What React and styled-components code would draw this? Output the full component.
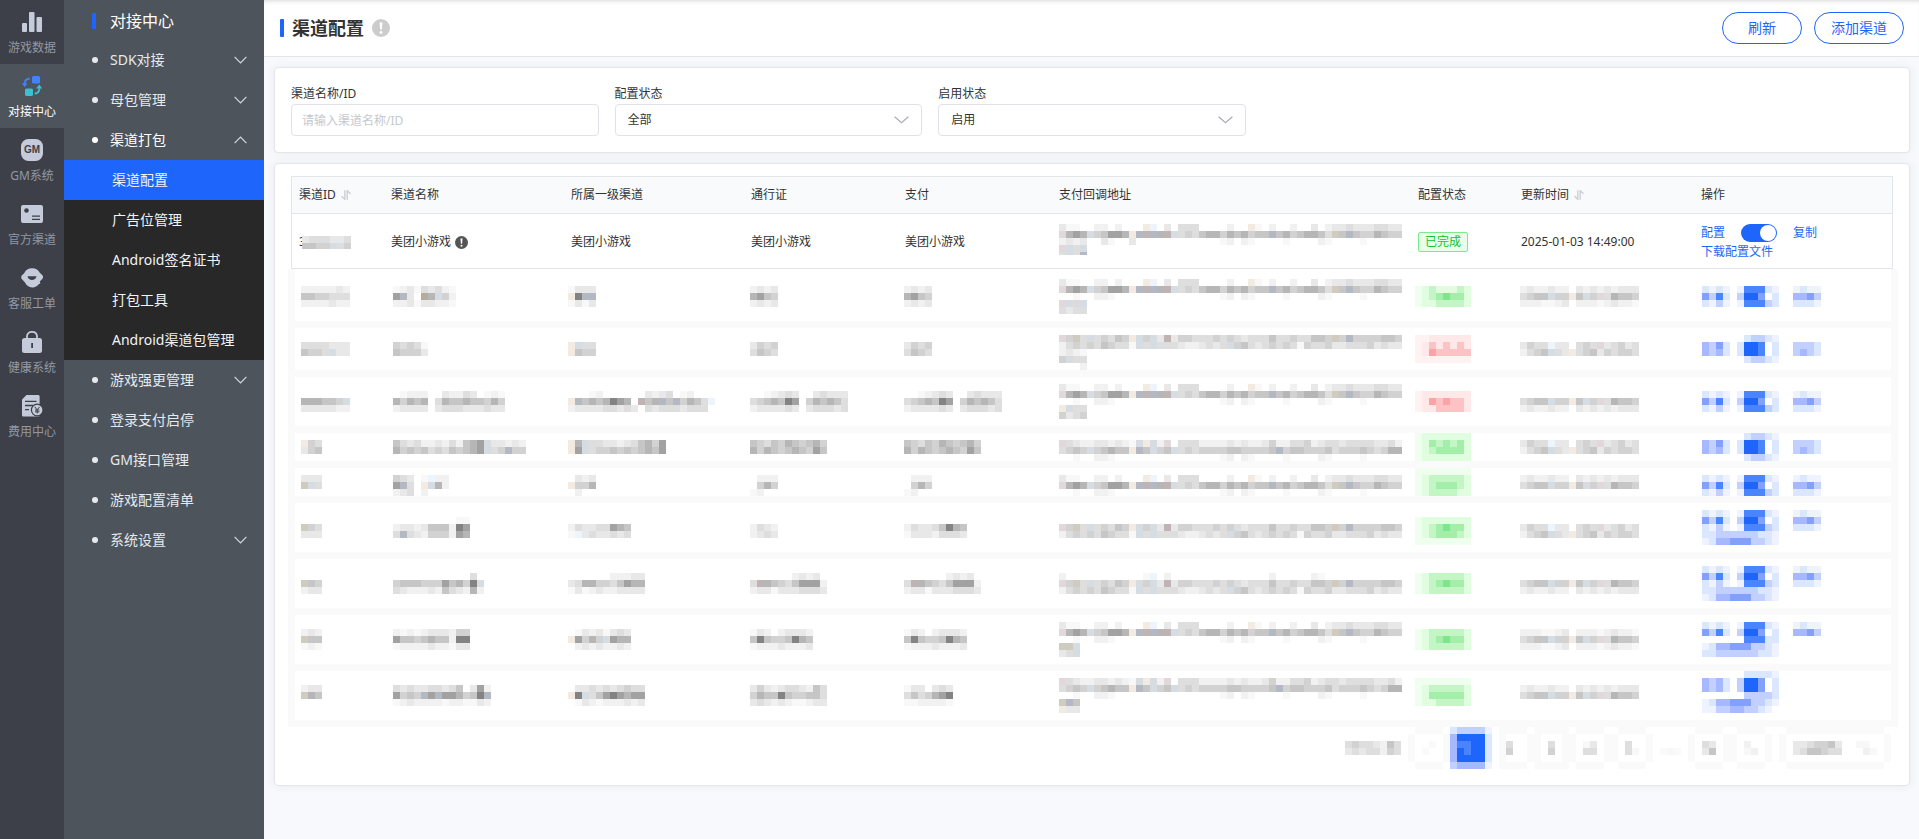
import React, { useId } from "react";
import styled, { createGlobalStyle, css } from "styled-components";

const C = {
  blue: "#1e66fb",
  rail: "#3d4048",
  side: "#4d545b",
  sub: "#282828",
  line: "#e4e5ea",
  text: "#333333",
  mask: "#fafafa",
};

const Global = createGlobalStyle`
  * { box-sizing: border-box; }
  body {
    margin: 0;
    font-family: "Noto Sans", "Noto Sans CJK SC", sans-serif;
    font-size: 12px;
    line-height: 16px;
    color: ${C.text};
    background: #f8f9fc;
  }
  button, input, select { font: inherit; color: inherit; }
  a { color: inherit; text-decoration: none; }
`;

/* ---------- shell ---------- */

const Shell = styled.div`
  display: flex;
  min-height: 100vh;
`;

const Rail = styled.nav`
  flex: 0 0 64px;
  background: ${C.rail};
`;

const RailLink = styled.a`
  display: flex;
  flex-direction: column;
  align-items: center;
  gap: 7px;
  height: 64px;
  padding-top: 11px;
  color: ${(p) => (p.$active ? "#ffffff" : "#9298a4")};
  background: ${(p) => (p.$active ? C.side : "transparent")};
  svg { display: block; width: 22px; height: 22px; }
`;

const Side = styled.nav`
  flex: 0 0 200px;
  background: ${C.side};
`;

const SideTitle = styled.h2`
  display: flex;
  align-items: center;
  gap: 14px;
  height: 40px;
  margin: 0;
  padding: 2px 0 0 28px;
  font-size: 16px;
  line-height: 20px;
  font-weight: 400;
  color: #fff;
  &::before {
    content: "";
    width: 4px;
    height: 16px;
    background: ${C.blue};
  }
`;

const SideLink = styled.a`
  display: flex;
  align-items: center;
  height: 40px;
  padding: 0 17px 0 28px;
  font-size: 14px;
  line-height: 20px;
  color: ${(p) => (p.$open ? "#ffffff" : "#e6e9ee")};
  &::before {
    content: "";
    width: 6px;
    height: 6px;
    margin-right: 12px;
    border-radius: 50%;
    background: currentColor;
  }
  svg { margin-left: auto; transform: ${(p) => (p.$open ? "rotate(180deg)" : "none")}; }
`;

const SubLink = styled.a`
  display: flex;
  align-items: center;
  height: 40px;
  padding-left: 48px;
  font-size: 14px;
  line-height: 20px;
  color: #f2f3f5;
  background: ${(p) => (p.$active ? C.blue : C.sub)};
`;

const Main = styled.main`
  flex: 1;
  min-width: 0;
`;

const PageHead = styled.header`
  display: flex;
  align-items: center;
  gap: 8px;
  height: 57px;
  padding: 0 15px 0 16px;
  background: #fff;
  border-bottom: 1px solid ${C.line};
  box-shadow: inset 0 4px 4px -3px rgba(0, 0, 0, 0.16);
`;

const PageTitle = styled.h1`
  display: flex;
  align-items: center;
  gap: 8px;
  margin: 0;
  font-size: 18px;
  line-height: 24px;
  font-weight: 700;
  &::before {
    content: "";
    width: 4px;
    height: 18px;
    border-radius: 1px;
    background: ${C.blue};
  }
`;

const Actions = styled.div`
  display: flex;
  gap: 12px;
  margin-left: auto;
`;

const PillButton = styled.button`
  min-width: 80px;
  height: 32px;
  padding: 0 16px;
  font-size: 14px;
  line-height: 20px;
  color: ${C.blue};
  background: #fff;
  border: 1px solid ${C.blue};
  border-radius: 16px;
`;

const Content = styled.div`
  display: flex;
  flex-direction: column;
  gap: 10px;
  padding: 10px 9px 10px 10px;
`;

const card = css`
  background: #fff;
  border: 1px solid ${C.line};
  border-radius: 4px;
  box-shadow: 0 0 10px rgba(40, 50, 90, 0.07);
`;

const Filters = styled.form`
  ${card}
  display: grid;
  grid-template-columns: repeat(5, 1fr);
  gap: 16px;
  padding: 18px 16px 16px;
`;

const Field = styled.div`
  display: flex;
  flex-direction: column;
  gap: 2px;
`;

const Label = styled.label``;

const control = css`
  display: block;
  width: 100%;
  height: 32px;
  background: #fff;
  border: 1px solid #e0e2e8;
  border-radius: 4px;
  outline: none;
`;

const TextInput = styled.input`
  ${control}
  padding: 0 10px;
  &::placeholder { color: #c5c8ce; opacity: 1; }
`;

const SelectWrap = styled.div`
  position: relative;
  svg { position: absolute; right: 13px; top: 12px; pointer-events: none; }
`;

const Select = styled.select`
  ${control}
  appearance: none;
  padding: 0 32px 0 12px;
`;

/* ---------- table ---------- */

const TableCard = styled.section`
  ${card}
  padding: 12px 16px 16px;
`;

const Table = styled.table`
  width: 100%;
  table-layout: fixed;
  border-collapse: separate;
  border-spacing: 0;
  border-top: 1px solid ${C.line};
`;

const edges = css`
  &:first-child { border-left: 1px solid ${C.line}; }
  &:last-child { border-right: 1px solid ${C.line}; }
`;

const Th = styled.th`
  ${edges}
  height: 37px;
  padding: 0 7px;
  text-align: left;
  font-weight: 400;
  background: #f9fafc;
  border-bottom: 1px solid ${C.line};
  svg { margin-left: 5px; vertical-align: -1px; }
`;

const Td = styled.td`
  ${edges}
  height: 55px;
  padding: ${(p) => (p.$top ? 10 : 2)}px 7px 0;
  vertical-align: ${(p) => (p.$top ? "top" : "middle")};
  border-bottom: 1px solid ${C.line};
`;

const MaskedTd = styled.td`
  height: ${(p) => p.$rows * 7 + 7 + (p.$first ? 3 : 0)}px;
  padding: ${(p) => (p.$first ? 3 : 0)}px 0 0 ${(p) => p.$inset}px;
  vertical-align: top;
  border-bottom: 7px solid ${C.mask};
  &:first-child { box-shadow: -3px 0 ${C.mask}, inset 4px 0 ${C.mask}; }
  &:last-child { box-shadow: 5px 0 ${C.mask}, inset -2px 0 ${C.mask}; }
`;

const Inline = styled.div`
  display: flex;
  align-items: center;
  gap: ${(p) => p.$gap || 0}px;
`;

const Stack = styled.div`
  display: flex;
  flex-direction: column;
  align-items: flex-start;
  gap: 2px;
`;

const Tag = styled.span`
  display: inline-block;
  height: 20px;
  padding: 0 6px;
  line-height: 18px;
  color: #13c22b;
  background: #e8ffe9;
  border: 1px solid #7bea8a;
  border-radius: 2px;
`;

const TextLink = styled.a`
  color: ${C.blue};
`;

const Toggle = styled.input`
  appearance: none;
  display: flex;
  align-items: center;
  justify-content: flex-end;
  width: 36px;
  height: 18px;
  margin: 0;
  padding: 1px;
  border-radius: 9px;
  background: ${C.blue};
  &::before {
    content: "";
    width: 16px;
    height: 16px;
    border-radius: 50%;
    background: #fff;
  }
`;

const Pager = styled.nav`
  display: flex;
  justify-content: flex-end;
  padding-right: 2px;
`;

const PagerButton = styled.button`
  padding: 0;
  border: 0;
  background: none;
`;

/* ---------- pixelated blocks ---------- */

const SHADES = {
  0: "#fafafa", 1: "#f8f8f8", 2: "#f1f1f1", 3: "#e8e8e8", 4: "#dedede",
  5: "#d2d2d2", 6: "#c6c6c6", 7: "#b6b6b6", 8: "#a2a2a2", 9: "#838383",
  y: "#f3ebe2", Y: "#b4ac9c", t: "#cfcbbf", b: "#d5dde3", B: "#b4b8c2",
  c: "#edf5fb", p: "#e0d8da", P: "#bfb3b4",
  h: "#effeef", i: "#e0fde0", j: "#c4f5c5", k: "#a3eea9", l: "#7de58b",
  q: "#fff2f2", r: "#ffe9e8", s: "#fdc3c4", u: "#fba3a6",
  v: "#eff2ff", w: "#dbe6ff", x: "#c2d0ff", z: "#a6b8ff", m: "#82a0fc",
  n: "#4b84ff", o: "#1e66fb",
};

const Blocks = styled.svg`
  display: block;
  flex: none;
`;

function Mosaic({ art, height, ...rest }) {
  const rows = art.split("/");
  const width = Math.max(...rows.map((r) => r.length)) * 7;
  return (
    <Blocks width={width} height={height || rows.length * 7} shapeRendering="crispEdges" aria-hidden="true" {...rest}>
      {rows.flatMap((row, y) =>
        [...row].map((ch, x) =>
          SHADES[ch] ? <rect key={`${x}-${y}`} x={x * 7} y={y * 7} width="7" height="7" fill={SHADES[ch]} /> : null
        )
      )}
    </Blocks>
  );
}

const HiddenId = styled(Mosaic)`
  margin-left: -4px;
`;

/* long address lines */
const A = "311..22.2...yc.3.444....2..y1.2..2..3.23343334433";
const D = "p787b56887yBPB7Pb4546775767566B67567764t6B6557655";
const F = "..1..221...............12.21....1....21....1.....";
const M1 = "p5t4b45465yb5b3P35544454543444644544665t5B5555665";
const M2 = "24545465441b4b4443223434b564345454154453344453433";
const L1 = "p4322332321byb2p.44422223232235224452344344443342";
const L2 = "4565b56766yB6b56b45455556655556B56655564555654577";
const F8 = "2...........1c.2..............2.....21...........";

/* date lines */
const Ta = "2322322.323232333";
const Tb = "4566b55y6b5p47665";
const Tc = "2221123.222123221";
const Td1 = "3544c33.454p34534";
const Te = "2456b43y456354554";

/* action lines */
const a1 = "wvwv.vnnnwv..vwvv";
const a2 = "mxnw.xoom.w..zzmx";
const a3 = "wvxv.vnnnxw..wwwv";
const b0 = "......wxxwv";
const b1 = "zxmw.woon.w..xxxw";
const b2 = "zxzw.woon.w..xzxw";
const d1 = "wwxxxxxxwwv";
const d2 = "vwzzmmmxxwv";

const COLUMNS = [
  { label: "渠道ID", width: 93, inset: 10, sort: true },
  { label: "渠道名称", width: 180, inset: 9 },
  { label: "所属一级渠道", width: 180, inset: 4 },
  { label: "通行证", width: 154, inset: 6 },
  { label: "支付", width: 154, inset: 6 },
  { label: "支付回调地址", width: 359, inset: 7 },
  { label: "配置状态", width: 103, inset: 4 },
  { label: "更新时间", width: 180, inset: 6, sort: true },
  { label: "操作", width: 199, inset: 8 },
];

const p4 = "//..12343..34333/4567698.576764/2333343.344434";
const p8 = "//......2323./4P765468882/23313334443";

const MASKED = [
  { rows: 7, cells: [
    "//2222232/6655444/2222322", "//123143421/8B3.Y7b52/223133221", "//1333/y9BB/1313", "//2323/7865/2323", "//2323/7865/2323",
    `/${A}/${D}/${F}/pbpb/4344`, "//hijiiiji/hijklkki/hiijjjji", `//${Ta}/${Tb}/${Tc}`, `//${a1}/${a2}/${a3}`] },
  { rows: 6, cells: [
    "//4444333/6554b33", "//54541/65553", "//yb44/y655", "//3545/4654", "//3545/4654",
    `/${M1}/${M2}/2321/5b44/...2`, "/qqrrrrrr/qrsrsrsr/qrusssss/qqqqqqqq", `//${Td1}/${Te}`, `/${b0}/${b1}/${b2}/${b0}`] },
  { rows: 7, cells: [
    "///777665b/3333322", "//.1222..32243.121/75767.4766766575/23333.3444333433",
    "//...12......3234.12/yB6767987.P67B6B5764c/2333344343.434443444", p4, p4,
    `/${A}/${D}/${F}/yb44/5345`, "//qrrrrrrr/qrusussr/qrrssssr", `///${Tb}/${Ta}`, `//${a1}/${a2}/${a3}`] },
  { rows: 4, cells: [
    "/y54/356", "/6434223242678b33232/7565645465678b45B55", "/y7b44332346758/y8b45565656768", "/65465765675/75765676586", "/65465765675/75765676586",
    `/${L1}/${L2}/${F}`, "hiiiiiii/hikjkjki/hijkkkki/hiiiiiii", `/${Td1}/${Te}`, `${b0}/${b1}/${b2}/${b0}`] },
  { rows: 4, cells: [
    "/333/tb4", "/543.1c22/8B4.yb72/234.2", "/.323/y557/.2", "/.222/.575/12", "/.222/.575/12",
    `/${A}/${D}/${F}`, "hhhhhhhh/hijjjjji/hijkkkji/hijjjjii", `/${Ta}/${Tb}`, `/${a1}/${a2}/${a3}`] },
  { rows: 7, cells: [
    "///t54/333", "//.........11/23323666298/4B432555287", "///243344876/1c3433434", "///2432/2343", "///243346976/133324443",
    `///${M1}/${M2}`, "//hiiiiiii/hijklkki/hijkkkji/hhhhhhhh", `///${Td1}/${Te}`, `/${a1}/${a2}/${a3}/${d1}/${d2}`] },
  { rows: 7, cells: [
    "///t65/233", "//...........4/566655586759b/4322232643272", "//......22233/34775546877/13123223333", p8, p8,
    `//${F8}/${M1}/${M2}`, "//hijjjjji/hijklkki/hijjjjji", `///${Tb}/${Ta}`, `/${a1}/${a2}/${a3}/${d1}/${d2}`] },
  { rows: 7, cells: [
    "//232/t66/121", "//21212333255/86656766299/12222322133", "//.13231343/y8575b877/.23232232", "//132.23332/696556976/122232223", "//132.23332/696556976/122232223",
    `/${A}/${D}/${F}/ttb/34b`, "//hijjjjji/hijklkki/hijjjjji", `//${Tc}/${Tb}/${Tc}`, `/${a1}/${a2}/......nnnww/${d2}/${d1}`] },
  { rows: 7, cells: [
    "//233/t76", "//4343344346.382/8565B8B887569B/12322221221132", "//.3343434544/y9b46898788/.1321222323", "//35323443264/57669655664/34323211233", "//133.343/4645789/1122221",
    `/${L1}/${L2}/${F}/tB6/y33`, "/hhhhhhhh/hijjjjji/hikkkkki/hiijjjji", `//${Ta}/${Tb}`, `......wwwwv/zxzw.xoom.w/zxzw.xoom.w/......xxxxw/${d2}/vvxxzzxxwv`] },
];

const PAGER = [
  { label: "上一页", art: ".0000./0....0/0..0.0/0.0..0/0....0/.0000." },
  { label: "第 1 页", art: "wxxxxv/zoooow/znnoow/zonoow/zoooow/xzzzzv" },
  { label: "第 2 页", art: ".0000./.0...0/.04..0/.05..0/.0...0/.0000." },
  { label: "第 3 页", art: "00000/0...0/0.4.0/0.5.0/0...0/00000" },
  { label: "第 4 页", art: ".0000./0....0/0.13.0/0.44.0/0....0/.0000." },
  { label: "第 5 页", art: ".0000./0....0/0.4..0/0.41.0/0....0/.0000." },
  { label: "更多页", art: "...../...../...../.010./...../....." },
  { label: "最后一页", art: ".0000./0....0/0.43.0/0.36.0/0....0/.0000." },
  { label: "下一页", art: ".0000./0....0/0.2..0/0.12.0/0....0/.0000.." },
  { label: "每页条数", art: ".00000000000000./0..............0/0.3345563..11..0/0.3466544...21.0/0..............0/.00000000000000." },
];

/* ---------- icons ---------- */

const Chevron = ({ width = 13, color = "#d3d8e0" }) => (
  <svg width={width} height={8} viewBox={`0 0 ${width} 8`} fill="none" stroke={color} strokeWidth="1.2" aria-hidden="true">
    <path d={`M.6 .8 L${width / 2} 6.8 L${width - 0.6} .8`} />
  </svg>
);

const SortIcon = () => (
  <svg width="10" height="10" viewBox="0 0 10 10" fill="none" stroke="#c9ccd2" strokeWidth="1.3" aria-hidden="true">
    <path d="M3.8 .2V9.3L.5 6.2M6.2 9.8V.7L9.5 3.8" />
  </svg>
);

const Notice = ({ size, color }) => (
  <svg width={size} height={size} viewBox="0 0 18 18" aria-hidden="true">
    <circle cx="9" cy="9" r="9" fill={color} />
    <path d="M7.6 3.6h2.8l-.5 7H8.100z" fill="#fff" />
    <circle cx="9" cy="13.400" r="1.400" fill="#fff" />
  </svg>
);

const IC = "#c5cbda";

const RAIL = [
  { label: "游戏数据", icon: (
    <g fill={IC}><rect x="1" y="12" width="5" height="9" rx="1" /><rect x="8" y="1" width="5.500" height="20" rx="1" /><rect x="15.500" y="6" width="5.500" height="15" rx="1" /></g>
  ) },
  { label: "对接中心", active: true, icon: (
    <g>
      <rect x="11" y="1" width="8" height="7.500" rx="1.500" fill="#3f83ff" />
      <path d="M8.600 3.500C5.500 4 3.800 5.800 3.600 8.200" fill="none" stroke="#3f83ff" strokeWidth="1.800" />
      <path d="M.8 8.200h5.800L3.600 12z" fill="#3f83ff" />
      <rect x="4" y="13.500" width="8" height="7.500" rx="1.500" fill="#3dbfd0" />
      <path d="M13.600 18.600c3.300-.4 4.800-2.600 4.900-5.200" fill="none" stroke="#3dbfd0" strokeWidth="1.800" />
      <path d="M15 13.600h6.200L18.300 9.600z" fill="#3dbfd0" />
    </g>
  ) },
  { label: "GM系统", icon: (
    <g>
      <rect x="0" y="0" width="22" height="22" rx="7.500" fill={IC} />
      <text x="11" y="14.200" textAnchor="middle" fontFamily="Liberation Sans, sans-serif" fontWeight="700" fontSize="10" fill={C.rail}>GM</text>
    </g>
  ) },
  { label: "官方渠道", icon: (
    <g>
      <rect x="0" y="2" width="22" height="18" rx="2" fill={IC} />
      <circle cx="5.500" cy="7.500" r="2.300" fill={C.rail} />
      <path d="M11 13.200h8M11 16.300h8" stroke={C.rail} strokeWidth="1.200" />
    </g>
  ) },
  { label: "客服工单", icon: (
    <g>
      <path d="M11 1.200c4 0 6.600 1.800 7.800 4.600l2.600 2.400c.9 1 .9 2.600 0 3.600l-2.600 2.600.6 1.800-2 1.200c-1.200 1.600-3.400 3-5.600 3-3 0-6.400-1.800-7.800-5L.8 12C0 11 0 9.400.8 8.400l2.400-2.200C4.600 3 7.400 1.200 11 1.200z" fill={IC} />
      <path d="M6.500 9.300h9c-.6 2.500-2.200 3.700-4.500 3.700s-3.900-1.200-4.500-3.700z" fill={C.rail} />
    </g>
  ) },
  { label: "健康系统", icon: (
    <g>
      <path d="M6 9V5.600C6 2.600 8 .9 11 .9s5 1.700 5 4.700V9" fill="none" stroke={IC} strokeWidth="1.800" />
      <rect x="1" y="7" width="20" height="15" rx="2.500" fill={IC} />
      <rect x="10.200" y="12" width="1.800" height="5" fill={C.rail} />
    </g>
  ) },
  { label: "费用中心", icon: (
    <g>
      <path d="M5.500 0H17c1 0 1.600.6 1.600 1.600V20c0 1-.6 1.600-1.600 1.600H2.600C1.600 21.600 1 21 1 20V4.500z" fill={IC} />
      <path d="M4 6.300h11.500M4 10.500h8M4 14.700h4" stroke={C.rail} strokeWidth="1.300" />
      <circle cx="16.200" cy="15" r="5.800" fill={IC} stroke={C.rail} strokeWidth="1.200" />
      <path d="M13.800 11.900l2.400 2.800 2.400-2.800M16.200 14.700v3.800M14 15h4.400M14 16.800h4.400" fill="none" stroke={C.rail} strokeWidth="1" />
    </g>
  ) },
];

const SUBMENU = ["渠道配置", "广告位管理", "Android签名证书", "打包工具", "Android渠道包管理"];

const MENU = [
  { label: "SDK对接", arrow: true },
  { label: "母包管理", arrow: true },
  { label: "渠道打包", arrow: true, open: true },
  { label: "游戏强更管理", arrow: true },
  { label: "登录支付启停" },
  { label: "GM接口管理" },
  { label: "游戏配置清单" },
  { label: "系统设置", arrow: true },
];

function SelectField({ label, value }) {
  const id = useId();
  return (
    <Field>
      <Label htmlFor={id}>{label}</Label>
      <SelectWrap>
        <Select id={id} defaultValue={value}>
          <option>{value}</option>
        </Select>
        <Chevron width={15} color="#a8abb2" />
      </SelectWrap>
    </Field>
  );
}

export default function App() {
  return (
    <>
      <Global />
      <Shell>
        <Rail aria-label="主导航">
          {RAIL.map((r) => (
            <RailLink key={r.label} href="#" $active={r.active}>
              <svg viewBox="0 0 22 22" aria-hidden="true">{r.icon}</svg>
              {r.label}
            </RailLink>
          ))}
        </Rail>
        <Side aria-label="对接中心">
          <SideTitle>对接中心</SideTitle>
          {MENU.map((m) => (
            <React.Fragment key={m.label}>
              <SideLink href="#" $open={m.open}>
                {m.label}
                {m.arrow && <Chevron />}
              </SideLink>
              {m.open && SUBMENU.map((s, i) => (
                <SubLink key={s} href="#" $active={i === 0}>{s}</SubLink>
              ))}
            </React.Fragment>
          ))}
        </Side>
        <Main>
          <PageHead>
            <PageTitle>渠道配置</PageTitle>
            <Notice size={18} color="#cccccc" />
            <Actions>
              <PillButton type="button">刷新</PillButton>
              <PillButton type="button">添加渠道</PillButton>
            </Actions>
          </PageHead>
          <Content>
            <Filters>
              <Field>
                <Label htmlFor="channel">渠道名称/ID</Label>
                <TextInput id="channel" placeholder="请输入渠道名称/ID" />
              </Field>
              <SelectField label="配置状态" value="全部" />
              <SelectField label="启用状态" value="启用" />
            </Filters>
            <TableCard>
              <Table>
                <colgroup>
                  {COLUMNS.map((c) => <col key={c.label} width={c.width} />)}
                </colgroup>
                <thead>
                  <tr>
                    {COLUMNS.map((c) => (
                      <Th key={c.label} scope="col">{c.label}{c.sort && <SortIcon />}</Th>
                    ))}
                  </tr>
                </thead>
                <tbody>
                  <tr>
                    <Td><Inline>3<HiddenId art="3444334/6655b45" height={13} /></Inline></Td>
                    <Td><Inline $gap={4}>美团小游戏<Notice size={13} color="#555555" /></Inline></Td>
                    <Td>美团小游戏</Td>
                    <Td>美团小游戏</Td>
                    <Td>美团小游戏</Td>
                    <Td $top><Mosaic art={`${A}/${D}/${"2323..31..3"}${F.slice(11)}/pb4b/4b4B`} height={31} /></Td>
                    <Td><Tag>已完成</Tag></Td>
                    <Td>2025-01-03 14:49:00</Td>
                    <Td>
                      <Stack>
                        <Inline $gap={16}>
                          <TextLink href="#">配置</TextLink>
                          <Toggle type="checkbox" role="switch" defaultChecked aria-label="启用" />
                          <TextLink href="#">复制</TextLink>
                        </Inline>
                        <TextLink href="#">下载配置文件</TextLink>
                      </Stack>
                    </Td>
                  </tr>
                  {MASKED.map((row, i) => (
                    <tr key={i}>
                      {row.cells.map((art, j) => (
                        <MaskedTd key={j} $rows={row.rows} $first={i === 0} $inset={COLUMNS[j].inset}>
                          <Mosaic art={art} />
                        </MaskedTd>
                      ))}
                    </tr>
                  ))}
                </tbody>
              </Table>
              <Pager aria-label="分页">
                <Mosaic art="........./........./45443264./34344254./........./........." />
                {PAGER.map((p) => (
                  <PagerButton key={p.label} type="button" aria-label={p.label}>
                    <Mosaic art={p.art} />
                  </PagerButton>
                ))}
              </Pager>
            </TableCard>
          </Content>
        </Main>
      </Shell>
    </>
  );
}
